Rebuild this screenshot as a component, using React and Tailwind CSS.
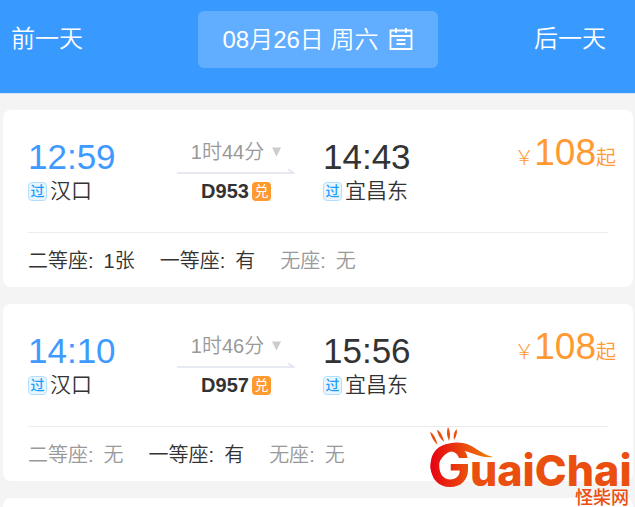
import React from "react";

const trains = [
  {
    code: "D953",
    depart: "12:59",
    from: "汉口",
    arrive: "14:43",
    to: "宜昌东",
    duration: "1时44分",
    price: 108,
    seats: [
      { name: "二等座", left: "1张", available: true },
      { name: "一等座", left: "有", available: true },
      { name: "无座", left: "无", available: false },
    ],
  },
  {
    code: "D957",
    depart: "14:10",
    from: "汉口",
    arrive: "15:56",
    to: "宜昌东",
    duration: "1时46分",
    price: 108,
    seats: [
      { name: "二等座", left: "无", available: false },
      { name: "一等座", left: "有", available: true },
      { name: "无座", left: "无", available: false },
    ],
  },
];

function CalendarIcon() {
  return (
    <svg className="w-6 h-6" viewBox="0 0 24 24" fill="none" stroke="currentColor" strokeWidth="1.8" aria-hidden="true">
      <path d="M1.500 2.500h21v18.500h-21z" />
      <path d="M1.500 8h21M7 0v5M17 0v5M7.500 12h9M7.500 16h9" />
    </svg>
  );
}

function DateBar() {
  return (
    <header className="grid grid-cols-[1fr_240px_1fr] items-center pt-[11px] pb-[25px] bg-[#3899ff] border-b border-[#d3e4f6] text-white text-2xl">
      <button type="button" className="justify-self-start pl-[11px] pb-0.5">
        前一天
      </button>
      <button type="button" className="flex items-center justify-center gap-2.5 h-[57px] rounded-md bg-[#61adff]">
        <span>08月26日 周六</span>
        <CalendarIcon />
      </button>
      <button type="button" className="justify-self-end pr-[29px] pb-0.5">
        后一天
      </button>
    </header>
  );
}

function Stop({ time, station, timeColor }) {
  return (
    <div>
      <div className={`text-[35px] leading-9 ${timeColor}`}>{time}</div>
      <div className="flex items-center gap-[3px] mt-1 text-[21px] leading-6 text-[#333]">
        <span className="flex items-center justify-center w-[19px] h-[19px] rounded-sm border border-[#b3dfff] bg-[#e9f6ff] text-sm leading-none font-medium text-[#1c9dfb]">
          过
        </span>
        <span>{station}</span>
      </div>
    </div>
  );
}

function Journey({ duration, code }) {
  return (
    <div className="flex flex-col items-center w-[118px]">
      <button type="button" className="flex items-center gap-2 text-xl leading-[26px] text-[#999]">
        {duration}
        <svg className="w-[9px] h-2.5" viewBox="0 0 9 10" fill="#ccc" aria-hidden="true">
          <path d="M0 0.5h9L4.5 9.5z" />
        </svg>
      </button>
      <svg className="w-full h-2 my-[3px]" viewBox="0 0 118 8" fill="none" stroke="#e0e4ec" strokeWidth="1.6" aria-hidden="true">
        <path d="M0 5h117l-6-3.600" />
      </svg>
      <div className="flex items-center gap-[3px] text-xl leading-6 font-bold text-[#333]">
        {code}
        <span className="flex items-center justify-center w-[19px] h-[19px] rounded-sm bg-[#ff9a30] text-sm leading-none font-normal text-white">
          兑
        </span>
      </div>
    </div>
  );
}

function TrainCard({ train }) {
  return (
    <article className="rounded-lg bg-white">
      <div className="grid grid-cols-[149fr_146fr_293fr] pl-[25px] pr-[17px] py-[29px]">
        <Stop time={train.depart} station={train.from} timeColor="text-[#3f9aff]" />
        <Journey duration={train.duration} code={train.code} />
        <div className="flex items-start justify-between">
          <Stop time={train.arrive} station={train.to} timeColor="text-[#333]" />
          <div className="flex items-baseline -mt-1 text-xl leading-9 text-[#ff9a33]">
            <span className="font-light">{"\uffe5"}</span>
            <span className="text-[37px]">{train.price}</span>
            <span>起</span>
          </div>
        </div>
      </div>
      <div className="flex gap-[25px] mx-[25px] pt-4 pb-3.5 border-t border-[#ececec] text-xl leading-6">
        {train.seats.map((seat) => (
          <div key={seat.name} className={seat.available ? "text-[#333]" : "text-[#999]"}>
            {seat.name}:<span className="ml-2.5">{seat.left}</span>
          </div>
        ))}
      </div>
    </article>
  );
}

function SiteLogo() {
  return (
    <svg className="absolute right-0 bottom-0 w-[215px] h-[87px]" viewBox="0 0 215 87" role="img" aria-label="GuaiChai 怪柴网">
      <defs>
        <linearGradient id="flame" gradientUnits="userSpaceOnUse" x1="10" y1="0" x2="73" y2="0">
          <stop offset="0" stopColor="#e60012" />
          <stop offset="0.55" stopColor="#ea4a0c" />
          <stop offset="1" stopColor="#f08300" />
        </linearGradient>
      </defs>
      <g fill="#ea4f10">
        <path d="M10 11.500Q15.500 15.500 17.500 25Q11.500 19 10 11.500z" />
        <path d="M17 9.500Q22.500 13 24 22Q18 17 17 9.500z" />
        <path d="M28 7Q31.500 13 29 21Q25.500 13 28 7z" />
        <path d="M36.500 9Q38 14 34 20Q32.500 14 36.500 9z" />
      </g>
      <path
        fill="url(#flame)"
        d="M14 56C10 51 10 47 11 42C14 30 23 23 36 22.500C53 22 59 34 73 37C60 39 52 31 38 30C27 30 20 38 18 46C17 51 16 54 14 56z"
      />
      <text x="8" y="66" fontSize="57" fontWeight="700" fill="url(#flame)" fontFamily="Inter, sans-serif">
        G
      </text>
      <text x="50" y="66" fontSize="43" fontWeight="800" fill="#ea4f10" fontFamily="Inter, sans-serif">
        uaiChai
      </text>
      <text x="155" y="84" fontSize="18" fontWeight="500" fill="#ea4f10" fontFamily="'Noto Sans CJK SC', sans-serif">
        怪柴网
      </text>
    </svg>
  );
}

export default function App() {
  return (
    <div className="relative flex flex-col min-h-screen bg-[#f4f4f4] font-['Liberation_Sans','Noto_Sans_CJK_SC',sans-serif] font-[350]">
      <DateBar />
      <main className="flex flex-col flex-1 gap-[17px] pt-4 pl-[3px] pr-0.5">
        {trains.map((train) => (
          <TrainCard key={train.code} train={train} />
        ))}
        <div className="flex-1 rounded-t-lg bg-white"></div>
      </main>
      <SiteLogo />
    </div>
  );
}
